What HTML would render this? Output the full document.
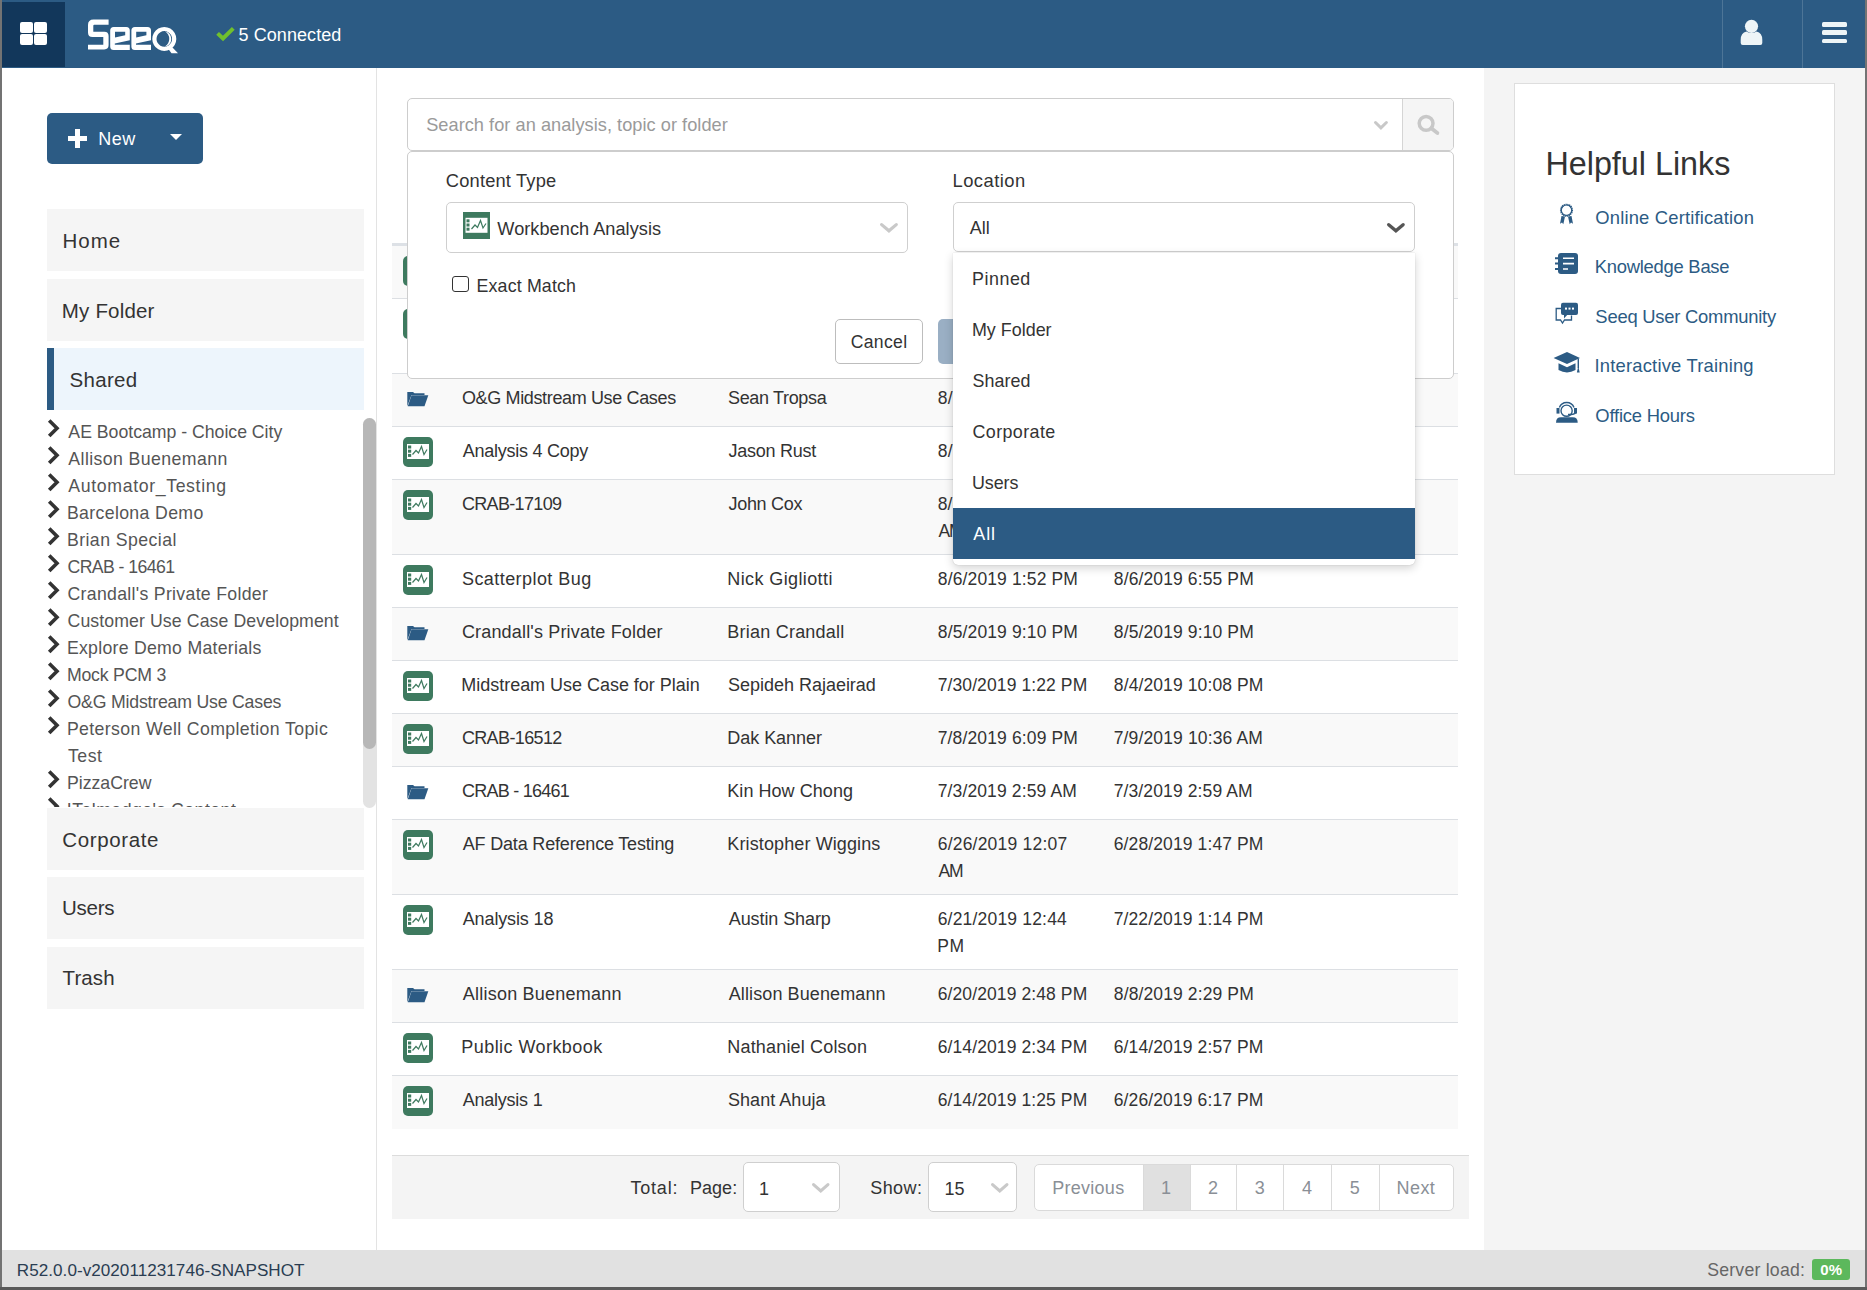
<!DOCTYPE html>
<html><head><meta charset="utf-8"><title>Seeq</title>
<style>
html,body{margin:0;padding:0}
body{width:1867px;height:1290px;position:relative;overflow:hidden;background:#fff;font-family:"Liberation Sans",sans-serif}
.a{position:absolute;display:block}
.t{position:absolute;white-space:nowrap;line-height:1}
</style></head><body>
<div class="a" style="left:0.0px;top:0.0px;width:1867.0px;height:68.0px;background:#2c5b84"></div>
<div class="a" style="left:2.0px;top:2.0px;width:63.0px;height:65.0px;background:#12375b"></div>
<div class="a" style="left:19.8px;top:21.7px;width:13.2px;height:11.2px;background:#fff;border-radius:2px"></div>
<div class="a" style="left:19.8px;top:34.0px;width:13.2px;height:11.2px;background:#fff;border-radius:2px"></div>
<div class="a" style="left:34.0px;top:21.7px;width:13.2px;height:11.2px;background:#fff;border-radius:2px"></div>
<div class="a" style="left:34.0px;top:34.0px;width:13.2px;height:11.2px;background:#fff;border-radius:2px"></div>
<svg class="a" style="left:84px;top:14px" width="100" height="44" viewBox="0 0 100 44">
<g fill="#fff">
<path d="M9.5 5.4 H24.6 V10.7 H10.3 Q9.3 10.7 9.3 11.7 V17.7 H20.3 Q24.6 17.7 24.6 22 V31 Q24.6 35.4 20.3 35.4 H4 V30.8 H19.3 V23 H8.5 Q4 23 4 18.5 V10.9 Q4 5.4 9.5 5.4 Z"/>
<path d="M29.7 12.9 H42.3 Q45.8 12.9 45.8 16.4 V26.2 L30.8 29.6 V30.8 H45.8 V35.9 H29.7 Q26.2 35.9 26.2 32.4 V16.4 Q26.2 12.9 29.7 12.9 Z M31 17.7 V23.6 L41.2 21.3 V17.7 Z" fill-rule="evenodd"/>
<path d="M50.9 12.9 H63.5 Q67 12.9 67 16.4 V26.2 L52 29.6 V30.8 H67 V35.9 H50.9 Q47.4 35.9 47.4 32.4 V16.4 Q47.4 12.9 50.9 12.9 Z M52.2 17.7 V23.6 L62.4 21.3 V17.7 Z" fill-rule="evenodd"/>
<path d="M80.3 12.9 A12 12 0 1 1 80.29 12.9 Z M80.3 17.1 A7.8 7.8 0 1 0 80.31 17.1 Z" fill-rule="evenodd"/>
<path d="M81 17.3 A7.8 7.8 0 0 1 81 32.6 A9 9 0 0 0 81 17.3 Z"/>
<path d="M84 34.5 L88 33 L94 39.3 L87.5 39.3 Z"/>
</g></svg>
<svg class="a" style="left:214px;top:25px" width="22" height="18" viewBox="0 0 22 18"><path d="M3.6 8.4 L9 13.4 L19.3 3.4" stroke="#70c02d" stroke-width="4" fill="none"/></svg>
<div class="t" style="left:238.48px;top:26px;font-size:18px;color:#fff;letter-spacing:0.080px;">5 Connected</div>
<div class="a" style="left:1722.0px;top:0.0px;width:1.0px;height:68.0px;background:#4d7597"></div>
<div class="a" style="left:1802.0px;top:0.0px;width:1.0px;height:68.0px;background:#4d7597"></div>
<svg class="a" style="left:1738px;top:17px" width="28" height="30" viewBox="0 0 28 30"><g fill="#eef5f7"><circle cx="13.5" cy="9.3" r="6.6"/><path d="M4.7 28 Q2.7 28 2.7 26 V23 Q2.7 15.5 8.5 14.5 Q13.5 17.5 18.5 14.5 Q24.3 15.5 24.3 23 V26 Q24.3 28 22.3 28 Z"/></g></svg>
<div class="a" style="left:1821.7px;top:22.0px;width:25.3px;height:4.8px;background:#eef5f7;border-radius:1.5px"></div>
<div class="a" style="left:1821.7px;top:30.4px;width:25.3px;height:4.8px;background:#eef5f7;border-radius:1.5px"></div>
<div class="a" style="left:1821.7px;top:38.5px;width:25.3px;height:4.8px;background:#eef5f7;border-radius:1.5px"></div>
<div class="a" style="left:376.0px;top:68.0px;width:1.0px;height:1182.0px;background:#e3e3e3"></div>
<div class="a" style="left:47.0px;top:113.0px;width:156.0px;height:51.0px;background:#2c5b84;border-radius:5px"></div>
<div class="a" style="left:67.8px;top:135.8px;width:19.6px;height:5.5px;background:#fff"></div>
<div class="a" style="left:74.9px;top:128.9px;width:5.5px;height:19.4px;background:#fff"></div>
<div class="t" style="left:98.22px;top:130px;font-size:18px;color:#fff;letter-spacing:0.462px;">New</div>
<svg class="a" style="left:169px;top:133px" width="14" height="8" viewBox="0 0 14 8"><path d="M1 1 H13 L7 7 Z" fill="#fff"/></svg>
<div class="a" style="left:47.0px;top:209.0px;width:317.0px;height:62.0px;background:#f5f5f5"></div>
<div class="t" style="left:62.52px;top:231px;font-size:20.5px;color:#333;letter-spacing:0.970px;">Home</div>
<div class="a" style="left:47.0px;top:279.0px;width:317.0px;height:62.0px;background:#f5f5f5"></div>
<div class="t" style="left:61.82px;top:301px;font-size:20.5px;color:#333;letter-spacing:0.187px;">My Folder</div>
<div class="a" style="left:47.0px;top:348.0px;width:317.0px;height:62.0px;background:#edf5fc"></div>
<div class="a" style="left:47.0px;top:348.0px;width:7.0px;height:62.0px;background:#2c5b84"></div>
<div class="t" style="left:69.57px;top:370px;font-size:20.5px;color:#333;letter-spacing:0.289px;">Shared</div>
<div class="a" style="left:0;top:410px;width:376px;height:397px;overflow:hidden"><svg class="a" style="left:44px;top:8.0px" width="18" height="20" viewBox="0 0 18 20"><path d="M5.2 2.5 L13 10.3 L5.2 18.1" stroke="#333" stroke-width="3.6" fill="none"/></svg><div class="t" style="left:68.37px;top:14px;font-size:17.7px;color:#555;letter-spacing:-0.016px;">AE Bootcamp - Choice City</div><svg class="a" style="left:44px;top:35.0px" width="18" height="20" viewBox="0 0 18 20"><path d="M5.2 2.5 L13 10.3 L5.2 18.1" stroke="#333" stroke-width="3.6" fill="none"/></svg><div class="t" style="left:68.37px;top:41px;font-size:17.7px;color:#555;letter-spacing:0.404px;">Allison Buenemann</div><svg class="a" style="left:44px;top:62.0px" width="18" height="20" viewBox="0 0 18 20"><path d="M5.2 2.5 L13 10.3 L5.2 18.1" stroke="#333" stroke-width="3.6" fill="none"/></svg><div class="t" style="left:68.37px;top:68px;font-size:17.7px;color:#555;letter-spacing:0.637px;">Automator_Testing</div><svg class="a" style="left:44px;top:89.0px" width="18" height="20" viewBox="0 0 18 20"><path d="M5.2 2.5 L13 10.3 L5.2 18.1" stroke="#333" stroke-width="3.6" fill="none"/></svg><div class="t" style="left:66.95px;top:95px;font-size:17.7px;color:#555;letter-spacing:0.351px;">Barcelona Demo</div><svg class="a" style="left:44px;top:116.0px" width="18" height="20" viewBox="0 0 18 20"><path d="M5.2 2.5 L13 10.3 L5.2 18.1" stroke="#333" stroke-width="3.6" fill="none"/></svg><div class="t" style="left:66.95px;top:122px;font-size:17.7px;color:#555;letter-spacing:0.437px;">Brian Special</div><svg class="a" style="left:44px;top:143.0px" width="18" height="20" viewBox="0 0 18 20"><path d="M5.2 2.5 L13 10.3 L5.2 18.1" stroke="#333" stroke-width="3.6" fill="none"/></svg><div class="t" style="left:67.50px;top:149px;font-size:17.7px;color:#555;letter-spacing:-0.597px;">CRAB - 16461</div><svg class="a" style="left:44px;top:170.0px" width="18" height="20" viewBox="0 0 18 20"><path d="M5.2 2.5 L13 10.3 L5.2 18.1" stroke="#333" stroke-width="3.6" fill="none"/></svg><div class="t" style="left:67.50px;top:176px;font-size:17.7px;color:#555;letter-spacing:0.302px;">Crandall's Private Folder</div><svg class="a" style="left:44px;top:197.0px" width="18" height="20" viewBox="0 0 18 20"><path d="M5.2 2.5 L13 10.3 L5.2 18.1" stroke="#333" stroke-width="3.6" fill="none"/></svg><div class="t" style="left:67.50px;top:203px;font-size:17.7px;color:#555;letter-spacing:0.102px;">Customer Use Case Development</div><svg class="a" style="left:44px;top:224.0px" width="18" height="20" viewBox="0 0 18 20"><path d="M5.2 2.5 L13 10.3 L5.2 18.1" stroke="#333" stroke-width="3.6" fill="none"/></svg><div class="t" style="left:66.95px;top:230px;font-size:17.7px;color:#555;letter-spacing:0.268px;">Explore Demo Materials</div><svg class="a" style="left:44px;top:251.0px" width="18" height="20" viewBox="0 0 18 20"><path d="M5.2 2.5 L13 10.3 L5.2 18.1" stroke="#333" stroke-width="3.6" fill="none"/></svg><div class="t" style="left:66.95px;top:257px;font-size:17.7px;color:#555;letter-spacing:-0.208px;">Mock PCM 3</div><svg class="a" style="left:44px;top:278.0px" width="18" height="20" viewBox="0 0 18 20"><path d="M5.2 2.5 L13 10.3 L5.2 18.1" stroke="#333" stroke-width="3.6" fill="none"/></svg><div class="t" style="left:67.56px;top:284px;font-size:17.7px;color:#555;letter-spacing:-0.199px;">O&amp;G Midstream Use Cases</div><svg class="a" style="left:44px;top:305.0px" width="18" height="20" viewBox="0 0 18 20"><path d="M5.2 2.5 L13 10.3 L5.2 18.1" stroke="#333" stroke-width="3.6" fill="none"/></svg><div class="t" style="left:66.95px;top:311px;font-size:17.7px;color:#555;letter-spacing:0.372px;">Peterson Well Completion Topic</div><div class="t" style="left:68.00px;top:338px;font-size:17.7px;color:#555;letter-spacing:0.522px;">Test</div><svg class="a" style="left:44px;top:359.0px" width="18" height="20" viewBox="0 0 18 20"><path d="M5.2 2.5 L13 10.3 L5.2 18.1" stroke="#333" stroke-width="3.6" fill="none"/></svg><div class="t" style="left:66.95px;top:365px;font-size:17.7px;color:#555;letter-spacing:0.003px;">PizzaCrew</div><svg class="a" style="left:44px;top:386.0px" width="18" height="20" viewBox="0 0 18 20"><path d="M5.2 2.5 L13 10.3 L5.2 18.1" stroke="#333" stroke-width="3.6" fill="none"/></svg><div class="t" style="left:66.77px;top:392px;font-size:17.7px;color:#555;letter-spacing:0.464px;">ITalmadge's Content</div></div>
<div class="a" style="left:363.0px;top:418.0px;width:13.0px;height:390.0px;background:#e3e3e3;border-radius:6.5px"></div>
<div class="a" style="left:363.0px;top:418.0px;width:13.0px;height:331.0px;background:#b7b7b7;border-radius:6.5px"></div>
<div class="a" style="left:47.0px;top:808.0px;width:317.0px;height:62.0px;background:#f5f5f5"></div>
<div class="t" style="left:62.26px;top:830px;font-size:20.5px;color:#333;letter-spacing:0.637px;">Corporate</div>
<div class="a" style="left:47.0px;top:877.0px;width:317.0px;height:62.0px;background:#f5f5f5"></div>
<div class="t" style="left:61.92px;top:898px;font-size:20.5px;color:#333;letter-spacing:-0.228px;">Users</div>
<div class="a" style="left:47.0px;top:947.0px;width:317.0px;height:62.0px;background:#f5f5f5"></div>
<div class="t" style="left:62.54px;top:968px;font-size:20.5px;color:#333;letter-spacing:0.113px;">Trash</div>
<div class="a" style="left:1484.0px;top:68.0px;width:381.0px;height:1182.0px;background:#f4f4f4"></div>
<div class="a" style="left:1514.0px;top:83.0px;width:321.0px;height:392.0px;background:#fff;border:1px solid #dedede;box-sizing:border-box"></div>
<div class="t" style="left:1545.45px;top:148px;font-size:32.3px;color:#333;">Helpful Links</div>
<div class="t" style="left:1595.33px;top:209px;font-size:18.4px;color:#2c5b84;letter-spacing:0.169px;">Online Certification</div>
<div class="t" style="left:1594.69px;top:258px;font-size:18.4px;color:#2c5b84;letter-spacing:-0.244px;">Knowledge Base</div>
<div class="t" style="left:1595.36px;top:308px;font-size:18.4px;color:#2c5b84;letter-spacing:-0.234px;">Seeq User Community</div>
<div class="t" style="left:1594.50px;top:357px;font-size:18.4px;color:#2c5b84;letter-spacing:0.196px;">Interactive Training</div>
<div class="t" style="left:1595.33px;top:407px;font-size:18.4px;color:#2c5b84;letter-spacing:-0.208px;">Office Hours</div>
<svg class="a" style="left:1556px;top:202px" width="24" height="24" viewBox="0 0 24 24"><circle cx="10.5" cy="8.2" r="5.7" fill="none" stroke="#2c5b84" stroke-width="1.7" stroke-dasharray="1.2 0.6"/><circle cx="10.5" cy="8.2" r="5.2" fill="none" stroke="#2c5b84" stroke-width="1.2"/><path d="M5.5 14 L4 21.8 L6 20.6 L7.3 22.2 L9 14.6 Z M15.5 14 L17 21.8 L15 20.6 L13.7 22.2 L12 14.6 Z" fill="#2c5b84"/></svg>
<svg class="a" style="left:1553px;top:252px" width="28" height="26" viewBox="0 0 28 26"><rect x="5" y="1" width="20" height="21" rx="3" fill="#2c5b84"/><g stroke="#fff" stroke-width="1.6"><path d="M10 6.3 H21 M10 11.6 H21 M10 17 H15"/></g><g stroke="#2c5b84" stroke-width="2"><path d="M2 6.3 H6 M2 11.6 H6 M2 17 H6"/></g></svg>
<svg class="a" style="left:1553px;top:300px" width="28" height="26" viewBox="0 0 28 26"><path d="M8 8.5 H3.2 V20 H7.5 L9.5 23 L11.5 20 H18.5 V15.5" fill="none" stroke="#2c5b84" stroke-width="1.3"/><rect x="8" y="2.8" width="17" height="12.2" rx="2" fill="#2c5b84"/><path d="M11 14 V18.5 L15 14 Z" fill="#2c5b84"/><g fill="#fff"><rect x="12" y="7.6" width="2" height="2"/><rect x="15.5" y="7.6" width="2" height="2"/><rect x="19" y="7.6" width="2" height="2"/></g></svg>
<svg class="a" style="left:1553px;top:350px" width="30" height="26" viewBox="0 0 30 26"><path d="M0.6 8 L14 2 L27 8 L14 14 Z" fill="#2c5b84"/><path d="M5.5 13.3 L14 17.2 L22.5 13.3 V20 Q14 24.8 5.5 20 Z" fill="#2c5b84"/><path d="M25.3 8.5 V18" stroke="#2c5b84" stroke-width="1.4"/><path d="M23.9 22.6 L25.3 16 L26.7 22.6 Z" fill="#2c5b84"/></svg>
<svg class="a" style="left:1553px;top:393px" width="28" height="32" viewBox="0 0 28 32"><g fill="none" stroke="#2c5b84"><circle cx="13.6" cy="17.7" r="5.6" stroke-width="1.4"/><path d="M6.4 14.5 A7.8 7.8 0 0 1 21 14.5" stroke-width="1.4"/><path d="M22.5 19.5 Q22 21.6 15 21.6" stroke-width="1.5"/></g><g fill="#2c5b84"><rect x="3.5" y="15" width="3" height="5.6"/><rect x="21" y="15" width="3" height="5.6"/><path d="M3 29.7 Q3 24.3 8 24.3 H19.7 Q24.7 24.3 24.7 29.7 Z"/></g></svg>
<div class="a" style="left:392.0px;top:243.0px;width:1066.0px;height:3.0px;background:#dde1e6"></div>
<div class="a" style="left:392.0px;top:246.0px;width:1066.0px;height:53.0px;background:#f9f9f9"></div>
<div class="a" style="left:392.0px;top:298.0px;width:1066.0px;height:1.0px;background:#dcdfe3"></div>
<svg class="a" style="left:403px;top:256.0px" width="30" height="30" viewBox="0 0 30 30"><rect width="30" height="30" rx="5" fill="#3e7a5f"/><rect x="4" y="7" width="22" height="15" fill="#fff"/><g fill="#3e7a5f"><rect x="5" y="8.5" width="3.2" height="3"/><rect x="5" y="12.7" width="3.2" height="3"/><rect x="5" y="16.9" width="3.2" height="3"/></g><path d="M9.5 17.5 L13 13.5 L15.5 16 L18.5 9.5 L21 17.5 L24 12.5" fill="none" stroke="#3e7a5f" stroke-width="1.2"/></svg>
<div class="a" style="left:392.0px;top:299.0px;width:1066.0px;height:75.0px;background:#fff"></div>
<div class="a" style="left:392.0px;top:373.0px;width:1066.0px;height:1.0px;background:#dcdfe3"></div>
<svg class="a" style="left:403px;top:309.0px" width="30" height="30" viewBox="0 0 30 30"><rect width="30" height="30" rx="5" fill="#3e7a5f"/><rect x="4" y="7" width="22" height="15" fill="#fff"/><g fill="#3e7a5f"><rect x="5" y="8.5" width="3.2" height="3"/><rect x="5" y="12.7" width="3.2" height="3"/><rect x="5" y="16.9" width="3.2" height="3"/></g><path d="M9.5 17.5 L13 13.5 L15.5 16 L18.5 9.5 L21 17.5 L24 12.5" fill="none" stroke="#3e7a5f" stroke-width="1.2"/></svg>
<div class="a" style="left:392.0px;top:374.0px;width:1066.0px;height:53.0px;background:#f9f9f9"></div>
<div class="a" style="left:392.0px;top:426.0px;width:1066.0px;height:1.0px;background:#dcdfe3"></div>
<svg class="a" style="left:406.8px;top:390.5px" width="22" height="16" viewBox="0 0 22 16"><path d="M0.3 15.3 V1 H6 L7.5 2.3 H17.5 V4 H4.5 Z" fill="#2c5b84"/><path d="M0.8 15.3 L4.5 4.3 H21.3 L17.5 15.3 Z" fill="#2c5b84"/></svg>
<div class="t" style="left:461.95px;top:389px;font-size:18px;color:#333;letter-spacing:-0.357px;">O&amp;G Midstream Use Cases</div>
<div class="t" style="left:727.98px;top:389px;font-size:18px;color:#333;letter-spacing:-0.335px;">Sean Tropsa</div>
<div class="t" style="left:937.84px;top:390px;font-size:17.5px;color:#333;letter-spacing:0.129px;">8/6/2019 1:52 PM</div>
<div class="a" style="left:392.0px;top:427.0px;width:1066.0px;height:53.0px;background:#fff"></div>
<div class="a" style="left:392.0px;top:479.0px;width:1066.0px;height:1.0px;background:#dcdfe3"></div>
<svg class="a" style="left:403px;top:437.0px" width="30" height="30" viewBox="0 0 30 30"><rect width="30" height="30" rx="5" fill="#3e7a5f"/><rect x="4" y="7" width="22" height="15" fill="#fff"/><g fill="#3e7a5f"><rect x="5" y="8.5" width="3.2" height="3"/><rect x="5" y="12.7" width="3.2" height="3"/><rect x="5" y="16.9" width="3.2" height="3"/></g><path d="M9.5 17.5 L13 13.5 L15.5 16 L18.5 9.5 L21 17.5 L24 12.5" fill="none" stroke="#3e7a5f" stroke-width="1.2"/></svg>
<div class="t" style="left:462.76px;top:442px;font-size:18px;color:#333;letter-spacing:-0.256px;">Analysis 4 Copy</div>
<div class="t" style="left:728.52px;top:442px;font-size:18px;color:#333;letter-spacing:-0.248px;">Jason Rust</div>
<div class="t" style="left:937.84px;top:443px;font-size:17.5px;color:#333;letter-spacing:0.129px;">8/6/2019 1:52 PM</div>
<div class="a" style="left:392.0px;top:480.0px;width:1066.0px;height:75.0px;background:#f9f9f9"></div>
<div class="a" style="left:392.0px;top:554.0px;width:1066.0px;height:1.0px;background:#dcdfe3"></div>
<svg class="a" style="left:403px;top:490.0px" width="30" height="30" viewBox="0 0 30 30"><rect width="30" height="30" rx="5" fill="#3e7a5f"/><rect x="4" y="7" width="22" height="15" fill="#fff"/><g fill="#3e7a5f"><rect x="5" y="8.5" width="3.2" height="3"/><rect x="5" y="12.7" width="3.2" height="3"/><rect x="5" y="16.9" width="3.2" height="3"/></g><path d="M9.5 17.5 L13 13.5 L15.5 16 L18.5 9.5 L21 17.5 L24 12.5" fill="none" stroke="#3e7a5f" stroke-width="1.2"/></svg>
<div class="t" style="left:461.89px;top:495px;font-size:18px;color:#333;letter-spacing:-0.655px;">CRAB-17109</div>
<div class="t" style="left:728.52px;top:495px;font-size:18px;color:#333;letter-spacing:-0.310px;">John Cox</div>
<div class="t" style="left:937.84px;top:496px;font-size:17.5px;color:#333;">8/6/2019 12:00</div>
<div class="t" style="left:938.57px;top:523px;font-size:17.5px;color:#333;letter-spacing:-1.281px;">AM</div>
<div class="a" style="left:392.0px;top:555.0px;width:1066.0px;height:53.0px;background:#fff"></div>
<div class="a" style="left:392.0px;top:607.0px;width:1066.0px;height:1.0px;background:#dcdfe3"></div>
<svg class="a" style="left:403px;top:565.0px" width="30" height="30" viewBox="0 0 30 30"><rect width="30" height="30" rx="5" fill="#3e7a5f"/><rect x="4" y="7" width="22" height="15" fill="#fff"/><g fill="#3e7a5f"><rect x="5" y="8.5" width="3.2" height="3"/><rect x="5" y="12.7" width="3.2" height="3"/><rect x="5" y="16.9" width="3.2" height="3"/></g><path d="M9.5 17.5 L13 13.5 L15.5 16 L18.5 9.5 L21 17.5 L24 12.5" fill="none" stroke="#3e7a5f" stroke-width="1.2"/></svg>
<div class="t" style="left:461.98px;top:570px;font-size:18px;color:#333;letter-spacing:0.436px;">Scatterplot Bug</div>
<div class="t" style="left:727.32px;top:570px;font-size:18px;color:#333;letter-spacing:0.390px;">Nick Gigliotti</div>
<div class="t" style="left:937.84px;top:571px;font-size:17.5px;color:#333;letter-spacing:0.129px;">8/6/2019 1:52 PM</div>
<div class="t" style="left:1113.84px;top:571px;font-size:17.5px;color:#333;letter-spacing:0.116px;">8/6/2019 6:55 PM</div>
<div class="a" style="left:392.0px;top:608.0px;width:1066.0px;height:53.0px;background:#f9f9f9"></div>
<div class="a" style="left:392.0px;top:660.0px;width:1066.0px;height:1.0px;background:#dcdfe3"></div>
<svg class="a" style="left:406.8px;top:624.5px" width="22" height="16" viewBox="0 0 22 16"><path d="M0.3 15.3 V1 H6 L7.5 2.3 H17.5 V4 H4.5 Z" fill="#2c5b84"/><path d="M0.8 15.3 L4.5 4.3 H21.3 L17.5 15.3 Z" fill="#2c5b84"/></svg>
<div class="t" style="left:461.89px;top:623px;font-size:18px;color:#333;letter-spacing:0.175px;">Crandall's Private Folder</div>
<div class="t" style="left:727.32px;top:623px;font-size:18px;color:#333;letter-spacing:0.225px;">Brian Crandall</div>
<div class="t" style="left:937.84px;top:624px;font-size:17.5px;color:#333;letter-spacing:0.129px;">8/5/2019 9:10 PM</div>
<div class="t" style="left:1113.84px;top:624px;font-size:17.5px;color:#333;letter-spacing:0.116px;">8/5/2019 9:10 PM</div>
<div class="a" style="left:392.0px;top:661.0px;width:1066.0px;height:53.0px;background:#fff"></div>
<div class="a" style="left:392.0px;top:713.0px;width:1066.0px;height:1.0px;background:#dcdfe3"></div>
<svg class="a" style="left:403px;top:671.0px" width="30" height="30" viewBox="0 0 30 30"><rect width="30" height="30" rx="5" fill="#3e7a5f"/><rect x="4" y="7" width="22" height="15" fill="#fff"/><g fill="#3e7a5f"><rect x="5" y="8.5" width="3.2" height="3"/><rect x="5" y="12.7" width="3.2" height="3"/><rect x="5" y="16.9" width="3.2" height="3"/></g><path d="M9.5 17.5 L13 13.5 L15.5 16 L18.5 9.5 L21 17.5 L24 12.5" fill="none" stroke="#3e7a5f" stroke-width="1.2"/></svg>
<div class="t" style="left:461.32px;top:676px;font-size:18px;color:#333;letter-spacing:-0.027px;">Midstream Use Case for Plain</div>
<div class="t" style="left:727.98px;top:676px;font-size:18px;color:#333;letter-spacing:-0.014px;">Sepideh Rajaeirad</div>
<div class="t" style="left:937.70px;top:677px;font-size:17.5px;color:#333;letter-spacing:0.103px;">7/30/2019 1:22 PM</div>
<div class="t" style="left:1113.84px;top:677px;font-size:17.5px;color:#333;letter-spacing:0.107px;">8/4/2019 10:08 PM</div>
<div class="a" style="left:392.0px;top:714.0px;width:1066.0px;height:53.0px;background:#f9f9f9"></div>
<div class="a" style="left:392.0px;top:766.0px;width:1066.0px;height:1.0px;background:#dcdfe3"></div>
<svg class="a" style="left:403px;top:724.0px" width="30" height="30" viewBox="0 0 30 30"><rect width="30" height="30" rx="5" fill="#3e7a5f"/><rect x="4" y="7" width="22" height="15" fill="#fff"/><g fill="#3e7a5f"><rect x="5" y="8.5" width="3.2" height="3"/><rect x="5" y="12.7" width="3.2" height="3"/><rect x="5" y="16.9" width="3.2" height="3"/></g><path d="M9.5 17.5 L13 13.5 L15.5 16 L18.5 9.5 L21 17.5 L24 12.5" fill="none" stroke="#3e7a5f" stroke-width="1.2"/></svg>
<div class="t" style="left:461.89px;top:729px;font-size:18px;color:#333;letter-spacing:-0.627px;">CRAB-16512</div>
<div class="t" style="left:727.32px;top:729px;font-size:18px;color:#333;letter-spacing:-0.042px;">Dak Kanner</div>
<div class="t" style="left:937.70px;top:730px;font-size:17.5px;color:#333;letter-spacing:0.139px;">7/8/2019 6:09 PM</div>
<div class="t" style="left:1113.70px;top:730px;font-size:17.5px;color:#333;letter-spacing:0.138px;">7/9/2019 10:36 AM</div>
<div class="a" style="left:392.0px;top:767.0px;width:1066.0px;height:53.0px;background:#fff"></div>
<div class="a" style="left:392.0px;top:819.0px;width:1066.0px;height:1.0px;background:#dcdfe3"></div>
<svg class="a" style="left:406.8px;top:783.5px" width="22" height="16" viewBox="0 0 22 16"><path d="M0.3 15.3 V1 H6 L7.5 2.3 H17.5 V4 H4.5 Z" fill="#2c5b84"/><path d="M0.8 15.3 L4.5 4.3 H21.3 L17.5 15.3 Z" fill="#2c5b84"/></svg>
<div class="t" style="left:461.89px;top:782px;font-size:18px;color:#333;letter-spacing:-0.733px;">CRAB - 16461</div>
<div class="t" style="left:727.32px;top:782px;font-size:18px;color:#333;letter-spacing:0.047px;">Kin How Chong</div>
<div class="t" style="left:937.70px;top:783px;font-size:17.5px;color:#333;letter-spacing:0.130px;">7/3/2019 2:59 AM</div>
<div class="t" style="left:1113.70px;top:783px;font-size:17.5px;color:#333;letter-spacing:0.116px;">7/3/2019 2:59 AM</div>
<div class="a" style="left:392.0px;top:820.0px;width:1066.0px;height:75.0px;background:#f9f9f9"></div>
<div class="a" style="left:392.0px;top:894.0px;width:1066.0px;height:1.0px;background:#dcdfe3"></div>
<svg class="a" style="left:403px;top:830.0px" width="30" height="30" viewBox="0 0 30 30"><rect width="30" height="30" rx="5" fill="#3e7a5f"/><rect x="4" y="7" width="22" height="15" fill="#fff"/><g fill="#3e7a5f"><rect x="5" y="8.5" width="3.2" height="3"/><rect x="5" y="12.7" width="3.2" height="3"/><rect x="5" y="16.9" width="3.2" height="3"/></g><path d="M9.5 17.5 L13 13.5 L15.5 16 L18.5 9.5 L21 17.5 L24 12.5" fill="none" stroke="#3e7a5f" stroke-width="1.2"/></svg>
<div class="t" style="left:462.76px;top:835px;font-size:18px;color:#333;letter-spacing:-0.179px;">AF Data Reference Testing</div>
<div class="t" style="left:727.32px;top:835px;font-size:18px;color:#333;letter-spacing:0.116px;">Kristopher Wiggins</div>
<div class="t" style="left:937.71px;top:836px;font-size:17.5px;color:#333;letter-spacing:0.211px;">6/26/2019 12:07</div>
<div class="t" style="left:938.57px;top:863px;font-size:17.5px;color:#333;letter-spacing:-1.281px;">AM</div>
<div class="t" style="left:1113.71px;top:836px;font-size:17.5px;color:#333;letter-spacing:0.115px;">6/28/2019 1:47 PM</div>
<div class="a" style="left:392.0px;top:895.0px;width:1066.0px;height:75.0px;background:#fff"></div>
<div class="a" style="left:392.0px;top:969.0px;width:1066.0px;height:1.0px;background:#dcdfe3"></div>
<svg class="a" style="left:403px;top:905.0px" width="30" height="30" viewBox="0 0 30 30"><rect width="30" height="30" rx="5" fill="#3e7a5f"/><rect x="4" y="7" width="22" height="15" fill="#fff"/><g fill="#3e7a5f"><rect x="5" y="8.5" width="3.2" height="3"/><rect x="5" y="12.7" width="3.2" height="3"/><rect x="5" y="16.9" width="3.2" height="3"/></g><path d="M9.5 17.5 L13 13.5 L15.5 16 L18.5 9.5 L21 17.5 L24 12.5" fill="none" stroke="#3e7a5f" stroke-width="1.2"/></svg>
<div class="t" style="left:462.76px;top:910px;font-size:18px;color:#333;letter-spacing:-0.133px;">Analysis 18</div>
<div class="t" style="left:728.76px;top:910px;font-size:18px;color:#333;letter-spacing:-0.088px;">Austin Sharp</div>
<div class="t" style="left:937.71px;top:911px;font-size:17.5px;color:#333;letter-spacing:0.185px;">6/21/2019 12:44</div>
<div class="t" style="left:937.16px;top:938px;font-size:17.5px;color:#333;letter-spacing:0.621px;">PM</div>
<div class="t" style="left:1113.70px;top:911px;font-size:17.5px;color:#333;letter-spacing:0.115px;">7/22/2019 1:14 PM</div>
<div class="a" style="left:392.0px;top:970.0px;width:1066.0px;height:53.0px;background:#f9f9f9"></div>
<div class="a" style="left:392.0px;top:1022.0px;width:1066.0px;height:1.0px;background:#dcdfe3"></div>
<svg class="a" style="left:406.8px;top:986.5px" width="22" height="16" viewBox="0 0 22 16"><path d="M0.3 15.3 V1 H6 L7.5 2.3 H17.5 V4 H4.5 Z" fill="#2c5b84"/><path d="M0.8 15.3 L4.5 4.3 H21.3 L17.5 15.3 Z" fill="#2c5b84"/></svg>
<div class="t" style="left:462.76px;top:985px;font-size:18px;color:#333;letter-spacing:0.231px;">Allison Buenemann</div>
<div class="t" style="left:728.76px;top:985px;font-size:18px;color:#333;letter-spacing:0.106px;">Allison Buenemann</div>
<div class="t" style="left:937.71px;top:986px;font-size:17.5px;color:#333;letter-spacing:0.102px;">6/20/2019 2:48 PM</div>
<div class="t" style="left:1113.84px;top:986px;font-size:17.5px;color:#333;letter-spacing:0.116px;">8/8/2019 2:29 PM</div>
<div class="a" style="left:392.0px;top:1023.0px;width:1066.0px;height:53.0px;background:#fff"></div>
<div class="a" style="left:392.0px;top:1075.0px;width:1066.0px;height:1.0px;background:#dcdfe3"></div>
<svg class="a" style="left:403px;top:1033.0px" width="30" height="30" viewBox="0 0 30 30"><rect width="30" height="30" rx="5" fill="#3e7a5f"/><rect x="4" y="7" width="22" height="15" fill="#fff"/><g fill="#3e7a5f"><rect x="5" y="8.5" width="3.2" height="3"/><rect x="5" y="12.7" width="3.2" height="3"/><rect x="5" y="16.9" width="3.2" height="3"/></g><path d="M9.5 17.5 L13 13.5 L15.5 16 L18.5 9.5 L21 17.5 L24 12.5" fill="none" stroke="#3e7a5f" stroke-width="1.2"/></svg>
<div class="t" style="left:461.32px;top:1038px;font-size:18px;color:#333;letter-spacing:0.437px;">Public Workbook</div>
<div class="t" style="left:727.32px;top:1038px;font-size:18px;color:#333;letter-spacing:0.171px;">Nathaniel Colson</div>
<div class="t" style="left:937.71px;top:1039px;font-size:17.5px;color:#333;letter-spacing:0.102px;">6/14/2019 2:34 PM</div>
<div class="t" style="left:1113.71px;top:1039px;font-size:17.5px;color:#333;letter-spacing:0.115px;">6/14/2019 2:57 PM</div>
<div class="a" style="left:392.0px;top:1076.0px;width:1066.0px;height:53.0px;background:#f9f9f9"></div>
<svg class="a" style="left:403px;top:1086.0px" width="30" height="30" viewBox="0 0 30 30"><rect width="30" height="30" rx="5" fill="#3e7a5f"/><rect x="4" y="7" width="22" height="15" fill="#fff"/><g fill="#3e7a5f"><rect x="5" y="8.5" width="3.2" height="3"/><rect x="5" y="12.7" width="3.2" height="3"/><rect x="5" y="16.9" width="3.2" height="3"/></g><path d="M9.5 17.5 L13 13.5 L15.5 16 L18.5 9.5 L21 17.5 L24 12.5" fill="none" stroke="#3e7a5f" stroke-width="1.2"/></svg>
<div class="t" style="left:462.76px;top:1091px;font-size:18px;color:#333;letter-spacing:-0.236px;">Analysis 1</div>
<div class="t" style="left:727.98px;top:1091px;font-size:18px;color:#333;letter-spacing:0.043px;">Shant Ahuja</div>
<div class="t" style="left:937.71px;top:1092px;font-size:17.5px;color:#333;letter-spacing:0.102px;">6/14/2019 1:25 PM</div>
<div class="t" style="left:1113.71px;top:1092px;font-size:17.5px;color:#333;letter-spacing:0.115px;">6/26/2019 6:17 PM</div>
<div class="a" style="left:392.0px;top:1155.0px;width:1077.0px;height:64.0px;background:#f4f4f4;border-top:1px solid #dcdcdc;box-sizing:border-box"></div>
<div class="t" style="left:630.40px;top:1179px;font-size:18px;color:#333;letter-spacing:0.805px;">Total:</div>
<div class="t" style="left:690.12px;top:1179px;font-size:18px;color:#333;letter-spacing:-0.005px;">Page:</div>
<div class="a" style="left:743.4px;top:1162.2px;width:97.1px;height:50.1px;background:#fff;border:1px solid #cfcfcf;border-radius:5px;box-sizing:border-box"></div>
<div class="t" style="left:758.93px;top:1180px;font-size:18px;color:#333;">1</div>
<div class="t" style="left:870.18px;top:1179px;font-size:18px;color:#333;letter-spacing:0.458px;">Show:</div>
<div class="a" style="left:928.3px;top:1162.2px;width:89.1px;height:50.1px;background:#fff;border:1px solid #cfcfcf;border-radius:5px;box-sizing:border-box"></div>
<div class="t" style="left:944.53px;top:1180px;font-size:18px;color:#333;">15</div>
<svg class="a" style="left:810.0px;top:1181.4px" width="21.5" height="14.1" viewBox="0 0 21.5 14.1"><path d="M3.55 3.55 L10.75 9.91 L17.95 3.55" stroke="#c9c9c9" stroke-width="3.1" stroke-linecap="round" fill="none"/></svg>
<svg class="a" style="left:988.5px;top:1181.4px" width="21.5" height="14.1" viewBox="0 0 21.5 14.1"><path d="M3.55 3.55 L10.75 9.91 L17.95 3.55" stroke="#c9c9c9" stroke-width="3.1" stroke-linecap="round" fill="none"/></svg>
<div class="a" style="left:1033.5px;top:1164.3px;width:420.1px;height:46.7px;background:#fff;border:1px solid #dadada;border-radius:5px;box-sizing:border-box"></div>
<div class="a" style="left:1142.5px;top:1165.3px;width:47.0px;height:44.7px;background:#e0e0e0"></div>
<div class="a" style="left:1142.5px;top:1164.3px;width:1.0px;height:46.7px;background:#dadada"></div>
<div class="a" style="left:1189.5px;top:1164.3px;width:1.0px;height:46.7px;background:#dadada"></div>
<div class="a" style="left:1236.3px;top:1164.3px;width:1.0px;height:46.7px;background:#dadada"></div>
<div class="a" style="left:1283.0px;top:1164.3px;width:1.0px;height:46.7px;background:#dadada"></div>
<div class="a" style="left:1331.0px;top:1164.3px;width:1.0px;height:46.7px;background:#dadada"></div>
<div class="a" style="left:1378.5px;top:1164.3px;width:1.0px;height:46.7px;background:#dadada"></div>
<div class="t" style="left:1052.32px;top:1179px;font-size:18px;color:#8a8f96;letter-spacing:0.256px;">Previous</div>
<div class="t" style="left:1142.5px;top:1178.7px;width:47.0px;text-align:center;font-size:18px;color:#8a8f96">1</div>
<div class="t" style="left:1189.5px;top:1178.7px;width:46.799999999999955px;text-align:center;font-size:18px;color:#8a8f96">2</div>
<div class="t" style="left:1236.3px;top:1178.7px;width:46.700000000000045px;text-align:center;font-size:18px;color:#8a8f96">3</div>
<div class="t" style="left:1283px;top:1178.7px;width:48px;text-align:center;font-size:18px;color:#8a8f96">4</div>
<div class="t" style="left:1331px;top:1178.7px;width:47.5px;text-align:center;font-size:18px;color:#8a8f96">5</div>
<div class="t" style="left:1396.52px;top:1179px;font-size:18px;color:#8a8f96;letter-spacing:0.433px;">Next</div>
<div class="a" style="left:407.0px;top:98.0px;width:1046.5px;height:53.0px;background:#fff;border:1px solid #cdcdcd;border-radius:5px;box-sizing:border-box"></div>
<div class="a" style="left:1402.3px;top:99.0px;width:50.2px;height:51.0px;background:#f5f5f5;border-left:1px solid #d5d5d5;border-radius:0 4px 4px 0"></div>
<div class="t" style="left:426.17px;top:116px;font-size:18.2px;color:#9a9a9a;letter-spacing:0.036px;">Search for an analysis, topic or folder</div>
<svg class="a" style="left:1372.2px;top:119.2px" width="17.9" height="13.0" viewBox="0 0 17.9 13.0"><path d="M3.50 3.50 L8.95 8.88 L14.40 3.50" stroke="#c8c8c8" stroke-width="3" stroke-linecap="round" fill="none"/></svg>
<svg class="a" style="left:1414px;top:112px" width="28" height="26" viewBox="0 0 28 26"><circle cx="12.1" cy="11.3" r="6.9" fill="none" stroke="#c8c8c8" stroke-width="3.5"/><path d="M17.6 16.6 L23.4 21" stroke="#c8c8c8" stroke-width="3.8" stroke-linecap="round"/></svg>
<div class="a" style="left:407.0px;top:151.4px;width:1046.5px;height:228.1px;background:#fff;border:1px solid #cdcdcd;border-radius:5px;box-sizing:border-box"></div>
<div class="t" style="left:445.87px;top:172px;font-size:18.3px;color:#333;letter-spacing:0.175px;">Content Type</div>
<div class="a" style="left:446.2px;top:202.0px;width:462.3px;height:51.0px;background:#fff;border:1px solid #cfcfcf;border-radius:5px;box-sizing:border-box"></div>
<svg class="a" style="left:463px;top:212px" width="27" height="27" viewBox="0 0 27 27"><rect width="27" height="27" fill="#3e7a5f"/><rect x="2.5" y="5.8" width="22" height="15" fill="#fff"/><g fill="#3e7a5f"><rect x="3.5" y="7.3" width="3" height="3"/><rect x="3.5" y="11.5" width="3" height="3"/><rect x="3.5" y="15.7" width="3" height="3"/></g><path d="M8.5 17 L12 13 L14.5 15.5 L17.5 8.5 L20 16 L23 11.5" fill="none" stroke="#3e7a5f" stroke-width="1.2"/></svg>
<div class="t" style="left:497.32px;top:220px;font-size:18.15px;color:#333;letter-spacing:0.044px;">Workbench Analysis</div>
<svg class="a" style="left:877.9px;top:220.8px" width="21.9" height="14.1" viewBox="0 0 21.9 14.1"><path d="M3.60 3.60 L10.95 9.84 L18.30 3.60" stroke="#c9c9c9" stroke-width="3.2" stroke-linecap="round" fill="none"/></svg>
<div class="a" style="left:452.4px;top:276.3px;width:16.6px;height:16.0px;border:1.6px solid #333;border-radius:3px;box-sizing:border-box"></div>
<div class="t" style="left:476.54px;top:278px;font-size:17.8px;color:#333;letter-spacing:0.158px;">Exact Match</div>
<div class="a" style="left:835.0px;top:319.2px;width:87.7px;height:44.8px;background:#fff;border:1px solid #bdbdbd;border-radius:5px;box-sizing:border-box"></div>
<div class="t" style="left:850.71px;top:334px;font-size:17.6px;color:#333;letter-spacing:0.337px;">Cancel</div>
<div class="a" style="left:938.0px;top:319.2px;width:62.0px;height:44.8px;background:#9aafc4;border-radius:5px"></div>
<div class="t" style="left:952.49px;top:172px;font-size:18.4px;color:#333;letter-spacing:0.463px;">Location</div>
<div class="a" style="left:953.0px;top:202.3px;width:461.6px;height:50.2px;background:#fff;border:1px solid #cfcfcf;border-radius:5px;box-sizing:border-box"></div>
<div class="t" style="left:969.76px;top:219px;font-size:18px;color:#333;">All</div>
<svg class="a" style="left:1385.1px;top:220.8px" width="21.8" height="14.2" viewBox="0 0 21.8 14.2"><path d="M3.70 3.70 L10.90 9.80 L18.10 3.70" stroke="#555" stroke-width="3.4" stroke-linecap="round" fill="none"/></svg>
<div class="a" style="left:953.0px;top:253.0px;width:462.0px;height:312.0px;background:#fff;border-radius:0 0 5px 5px;box-shadow:0 3px 10px rgba(0,0,0,0.18), 0 0 1px rgba(0,0,0,0.25)"></div>
<div class="t" style="left:971.93px;top:271px;font-size:17.9px;color:#333;letter-spacing:0.537px;">Pinned</div>
<div class="t" style="left:971.93px;top:322px;font-size:17.9px;color:#333;letter-spacing:0.012px;">My Folder</div>
<div class="t" style="left:972.59px;top:373px;font-size:17.9px;color:#333;letter-spacing:0.049px;">Shared</div>
<div class="t" style="left:972.49px;top:424px;font-size:17.9px;color:#333;letter-spacing:0.401px;">Corporate</div>
<div class="t" style="left:972.02px;top:475px;font-size:17.9px;color:#333;letter-spacing:-0.079px;">Users</div>
<div class="a" style="left:953.0px;top:508.0px;width:462.0px;height:50.6px;background:#2c5b84"></div>
<div class="t" style="left:973.37px;top:526px;font-size:17.9px;color:#fff;letter-spacing:0.920px;">All</div>
<div class="a" style="left:0.0px;top:1250.0px;width:1867.0px;height:40.0px;background:#e1e1e1"></div>
<div class="t" style="left:16.80px;top:1262px;font-size:17.1px;color:#2a3d52;letter-spacing:0.036px;">R52.0.0-v202011231746-SNAPSHOT</div>
<div class="t" style="left:1707.20px;top:1262px;font-size:17.7px;color:#666;letter-spacing:0.217px;">Server load:</div>
<div class="a" style="left:1812.3px;top:1259.0px;width:37.7px;height:20.7px;background:#5cb85c;border-radius:3px"></div>
<div class="t" style="left:1812.3px;top:1262.3px;width:37.7px;text-align:center;font-size:15px;font-weight:bold;color:#fff">0%</div>
<div class="a" style="left:0.0px;top:0.0px;width:2.0px;height:1290.0px;background:#737373"></div>
<div class="a" style="left:1865.0px;top:0.0px;width:2.0px;height:1290.0px;background:#737373"></div>
<div class="a" style="left:0.0px;top:1287.0px;width:1867.0px;height:3.0px;background:#5a5a5a"></div>
</body></html>
